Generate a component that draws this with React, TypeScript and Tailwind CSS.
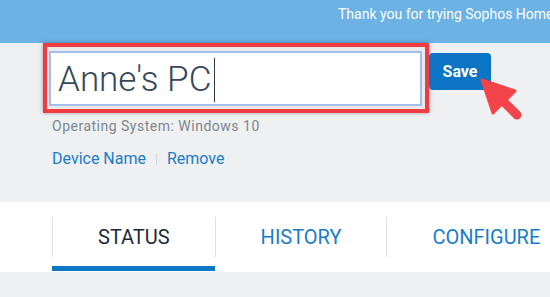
import React from "react";

const font = { fontFamily: "Roboto, 'Noto Sans', sans-serif" };

function Tab({ label, active }: { label: string; active?: boolean }) {
  return (
    <div className="flex flex-col">
      <div
        className={`flex h-[40px] items-center border-l border-[#dfe2e5] px-[45px] text-[20px] leading-none whitespace-nowrap ${
          active ? "text-[#1b2a3b]" : "text-[#1a7cc8]"
        }`}
      >
        {label}
      </div>
      <div className="h-[9px]" />
      <div className={`h-[5px] ${active ? "bg-[#0b78c6]" : ""}`} />
    </div>
  );
}

export default function App() {
  return (
    <div
      className="relative h-[297px] w-[550px] overflow-hidden bg-[#eef0f2]"
      style={font}
    >
      {/* Banner */}
      <div className="flex h-[43px] items-start bg-[#6cb2e5] pl-[338px] pt-[6px]">
        <span className="whitespace-nowrap text-[14px] leading-[17px] text-white">
          Thank you for trying Sophos Home
        </span>
      </div>

      {/* Device name editor */}
      <div className="pl-[43px]">
        <div className="flex items-start">
          <div className="h-[70px] w-[386px] border-4 border-[#f03b41] bg-[#e9eaec] pb-[3px] pl-[2px] pr-[3px] pt-[4px] shadow-[0_0_4px_rgba(0,0,0,0.35)]">
            <div className="flex h-full items-center border-2 border-[#a3bdec] bg-white pl-[7px] pt-[2px]">
              <span className="text-[35px] font-light leading-none text-[#35475a]">
                Anne's PC
              </span>
              <span className="ml-[3px] inline-block h-[44px] w-px bg-[#2c3a48]" />
            </div>
          </div>
          <button className="mt-[10px] flex h-[37px] w-[62px] items-center justify-center rounded-[4px] bg-[#0b74c4] text-[16px] font-bold text-white">
            Save
          </button>
        </div>

        <div className="mt-[5px] pl-[9px] text-[14px] leading-[16px] tracking-[0.5px] text-[#7d868f]">
          Operating System: Windows 10
        </div>

        <div className="mt-[15px] flex items-center pl-[9px] text-[16px] leading-[20px] text-[#1a7cc8]">
          <span>Device Name</span>
          <span className="mx-[10px] h-[12px] w-px bg-[#d3d7db]" />
          <span>Remove</span>
        </div>
      </div>

      {/* Tabs */}
      <div className="mt-[33px] flex h-[70px] bg-white pl-[52px] pt-[15px]">
        <Tab label="STATUS" active />
        <Tab label="HISTORY" />
        <Tab label="CONFIGURE" />
      </div>

      {/* Pointer arrow */}
      <svg
        className="absolute left-[470px] top-[70px]"
        width="60"
        height="60"
        viewBox="0 0 60 60"
      >
        <line
          x1="33"
          y1="31"
          x2="47"
          y2="45"
          stroke="#f2444a"
          strokeWidth="9"
          strokeLinecap="round"
        />
        <polygon
          points="12,10 45,21 23,43"
          fill="#f2444a"
          stroke="#f2444a"
          strokeWidth="3"
          strokeLinejoin="round"
        />
      </svg>
    </div>
  );
}
